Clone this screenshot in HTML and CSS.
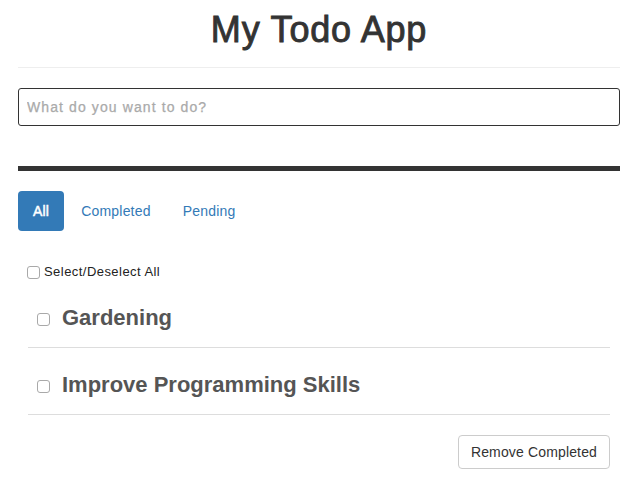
FILE: index.html
```html
<!DOCTYPE html>
<html lang="en">
<head>
<meta charset="utf-8">
<title>My Todo App</title>
<link rel="stylesheet" href="styles.css">
</head>
<body>
<div class="container">
  <h1 class="title">My Todo App</h1>
  <hr class="rule">
  <input class="new-todo" type="text" placeholder="What do you want to do?">
  <div class="bar"></div>
  <ul class="tabs">
    <li><a class="tab active" href="#">All</a></li>
    <li><a class="tab" href="#">Completed</a></li>
    <li><a class="tab" href="#">Pending</a></li>
  </ul>
  <label class="select-all"><input class="check" type="checkbox">Select/Deselect All</label>
  <ul class="todos">
    <li class="todo"><input class="check todo-check" type="checkbox"><h3 class="todo-text">Gardening</h3></li>
    <li class="todo"><input class="check todo-check" type="checkbox"><h3 class="todo-text">Improve Programming Skills</h3></li>
  </ul>
  <div class="actions"><button class="btn" type="button">Remove Completed</button></div>
</div>
</body>
</html>
```

FILE: styles.css
```css
* { box-sizing: border-box; }
html, body { margin: 0; padding: 0; background: #fff; }
body {
  font-family: "Liberation Sans", Arial, Helvetica, sans-serif;
  font-size: 14px;
  color: #333;
}
.container {
  padding: 0 13px 0 18px;
}
.title {
  margin: 10px 0 0;
  font-size: 36px;
  line-height: 40px;
  font-weight: 400;
  text-align: center;
  color: #333;
  letter-spacing: 0.8px;
  -webkit-text-stroke: 0.9px #333;
}
.rule {
  margin: 17px 0 20px;
  border: 0;
  border-top: 1px solid #eee;
  height: 0;
}
.new-todo {
  display: block;
  width: 100%;
  height: 38px;
  margin: 0;
  padding: 0 8px;
  border: 1px solid #333;
  border-radius: 3px;
  font-family: inherit;
  font-size: 14px;
  letter-spacing: 1.1px;
  color: #333;
  outline: none;
}
.new-todo::placeholder {
  color: #aaa;
  -webkit-text-stroke: 0.25px #aaa;
}
.bar {
  margin-top: 40px;
  height: 5px;
  background: #333;
}
.tabs {
  list-style: none;
  margin: 20px 0 0;
  padding: 0;
  display: flex;
  gap: 2px;
}
.tab {
  display: block;
  padding: 10px 15px;
  line-height: 20px;
  font-size: 14px;
  color: #337ab7;
  text-decoration: none;
  border-radius: 4px;
  letter-spacing: 0.2px;
}
.tab.active {
  background: #337ab7;
  color: #fff;
  -webkit-text-stroke: 0.5px #fff;
}
.select-all {
  display: flex;
  align-items: center;
  margin-top: 31px;
  padding-left: 9px;
  height: 19px;
  font-size: 13px;
  line-height: 19px;
  letter-spacing: 0.45px;
  color: #222;
}
.check {
  appearance: none;
  -webkit-appearance: none;
  width: 13px;
  height: 13px;
  margin: 1px 4px 0 0;
  border: 1px solid #a9a9a9;
  border-radius: 3px;
  background: #fff;
  flex: none;
}
.todos {
  list-style: none;
  margin: 0 10px;
  padding: 0;
}
.todo {
  display: flex;
  align-items: flex-start;
  padding-left: 9px;
  border-bottom: 1px solid #ddd;
}
.todo-check {
  margin: 32px 12px 0 0;
}
.todo-text {
  margin: 25px 0 17px;
  font-size: 22px;
  line-height: 24px;
  font-weight: 700;
  color: #555;
}
.actions {
  display: flex;
  justify-content: flex-end;
  margin: 20px 10px 0;
}
.btn {
  height: 34px;
  padding: 6px 12px;
  font-family: inherit;
  font-size: 14px;
  line-height: 20px;
  color: #333;
  background: #fff;
  border: 1px solid #ccc;
  border-radius: 4px;
  letter-spacing: 0.15px;
}
```
